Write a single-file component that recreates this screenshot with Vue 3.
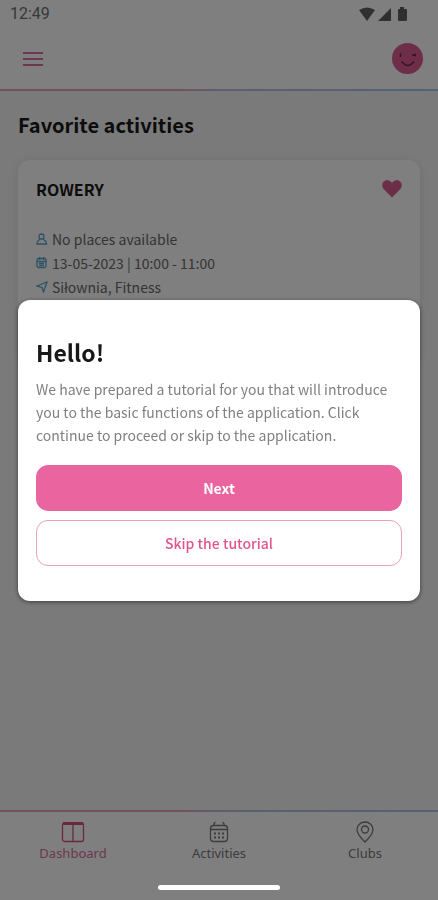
<script setup>
const details = [
  { icon: 'person', text: 'No places available' },
  { icon: 'calendar', text: '13-05-2023 | 10:00 - 11:00' },
  { icon: 'send', text: 'Siłownia, Fitness' },
]
const tabs = [
  { icon: 'dashboard', label: 'Dashboard', active: true },
  { icon: 'activities', label: 'Activities', active: false },
  { icon: 'clubs', label: 'Clubs', active: false },
]
</script>

<template>
  <div class="screen">
    <header class="top">
      <div class="status">
        <span>12:49</span>
        <svg class="status-icons" viewBox="0 0 49 16" aria-hidden="true">
          <path d="M0 4Q8 -1 16 4L8 15Z" />
          <path d="M19 15L32 2V15Z" />
          <path d="M41 3V1h4v2h2q1 0 1 1v10q0 1-1 1h-7q-1 0-1-1V4q0-1 1-1z" />
        </svg>
      </div>
      <div class="bar">
        <button class="icon-button" type="button" aria-label="Menu">
          <svg class="menu-icon" viewBox="0 0 20 16"><path d="M0 2h20M0 8h20M0 14h20" /></svg>
        </button>
        <button class="icon-button" type="button" aria-label="Profile">
          <svg class="avatar" viewBox="0 0 31 31">
            <circle cx="15.5" cy="15.5" r="15.5" />
            <path d="M8.500 10.500v3.500M20 12.500l4-1.200M21 12l3 .8M9.500 18.500l1.500 1.500q5 5 9.500 0l1.500-1.500" />
          </svg>
        </button>
      </div>
    </header>

    <main class="content">
      <h1>Favorite activities</h1>
      <article class="card">
        <div class="card-head">
          <h2>ROWERY</h2>
          <button class="icon-button" type="button" aria-label="Remove from favorites">
            <svg class="heart" viewBox="0 0 20 18">
              <path d="M10 17.500L2 9.500C-.8 6.500 0 2 3 .8 5.500-.3 8.500.6 10 3 11.500.6 14.500-.3 17 .8 20 2 20.800 6.500 18 9.500Z" />
            </svg>
          </button>
        </div>
        <ul class="details">
          <li v-for="item in details" :key="item.icon">
            <svg class="detail-icon" viewBox="0 0 12 12" aria-hidden="true">
              <template v-if="item.icon === 'person'">
                <circle cx="5.500" cy="3.500" r="2.500" />
                <path d="M4 6L1.500 8.500 1 11h9.500L10 8.500 7 6" />
              </template>
              <template v-else-if="item.icon === 'calendar'">
                <rect x="1" y="1.500" width="9" height="9" rx="1.500" />
                <path d="M1 4.500h9M3.500 0v3M7.500 0v3M3 6.500h5M3 8.500h5" />
              </template>
              <path v-else d="M1 5L11 1 7.500 11 6 6.500Z" />
            </svg>
            <span>{{ item.text }}</span>
          </li>
        </ul>
      </article>
    </main>

    <nav class="tabs">
      <a v-for="tab in tabs" :key="tab.label" href="#" :class="{ active: tab.active }">
        <svg class="tab-icon" viewBox="0 0 24 22" aria-hidden="true">
          <template v-if="tab.icon === 'dashboard'">
            <rect x="1.500" y="2" width="21" height="18.500" rx="2" />
            <path d="M12 2v18" />
            <path class="thick" d="M2 2.500h20" />
          </template>
          <template v-else-if="tab.icon === 'activities'">
            <rect x="3.500" y="4.500" width="17" height="16" rx="3" />
            <path d="M3.500 8.500h17M7 4.500V3q0-1.500 1.500-1.500M17 4.500V3q0-1.500-1.500-1.500" />
            <path class="dots" d="M7 12.500h2M11 12.500h2M15 12.500h2M7 16.500h2M11 16.500h2M15 16.500h2" />
          </template>
          <template v-else>
            <path d="M12 21Q4 13.500 4 8.500a8 7.500 0 0 1 16 0Q20 13.500 12 21Z" />
            <circle cx="12" cy="8.500" r="3.500" />
          </template>
        </svg>
        <span>{{ tab.label }}</span>
      </a>
    </nav>

    <div class="overlay">
      <section class="dialog" role="dialog" aria-modal="true" aria-labelledby="dialog-title">
        <h2 id="dialog-title">Hello!</h2>
        <p>
          We have prepared a tutorial for you that will introduce you to the basic functions of
          the application. Click continue to proceed or skip to the application.
        </p>
        <button class="action primary" type="button">Next</button>
        <button class="action" type="button">Skip the tutorial</button>
      </section>
      <div class="home-indicator"></div>
    </div>
  </div>
</template>

<style>
body {
  margin: 0;
}
</style>

<style scoped>
* {
  box-sizing: border-box;
}
.screen {
  display: flex;
  flex-direction: column;
  min-height: 100vh;
  background: #f4f4f4;
  color: #181818;
  font-family: "Noto Sans CJK SC", "Noto Sans", sans-serif;
}
h1, h2, p, ul {
  margin: 0;
  padding: 0;
}
svg {
  display: block;
}
.icon-button {
  padding: 0;
  border: 0;
  background: none;
}
.top {
  background: #fff;
  border-bottom: 2px solid;
  border-image: linear-gradient(90deg, #e8a0b4 40%, #bcbcdc 50%, #a8c4e8) 1;
}
.status {
  display: flex;
  align-items: center;
  justify-content: space-between;
  height: 28px;
  padding: 0 30px 0 10px;
  color: #707070;
  font: 16px/28px Roboto, sans-serif;
}
.status-icons {
  width: 49px;
  height: 16px;
  fill: #606060;
}
.bar {
  display: flex;
  align-items: center;
  justify-content: space-between;
  height: 61px;
  padding: 0 15px 0 23px;
}
.menu-icon {
  width: 20px;
  height: 16px;
  fill: none;
  stroke: #d8709a;
  stroke-width: 2;
}
.avatar {
  width: 31px;
  height: 31px;
  fill: #dc5a90;
}
.avatar path {
  fill: none;
  stroke: #702848;
  stroke-width: 1.500;
}
.content {
  flex: 1;
  padding: 18px;
}
h1 {
  font-size: 20px;
  line-height: 32px;
}
.card {
  margin-top: 19px;
  padding-bottom: 54px;
  border-radius: 12px;
  background: #fff;
  box-shadow: 0 1px 8px rgba(0, 0, 0, 0.1);
}
.card-head {
  display: flex;
  align-items: center;
  justify-content: space-between;
  height: 58px;
  padding: 0 18px;
}
.card h2 {
  font-size: 16px;
  line-height: 24px;
}
.heart {
  width: 20px;
  height: 18px;
  fill: #d85a8c;
}
.details {
  padding: 9px 18px;
  list-style: none;
  color: #686868;
  font-size: 14px;
  line-height: 24px;
}
.details li {
  display: flex;
  align-items: center;
  gap: 4px;
}
.detail-icon {
  width: 12px;
  height: 12px;
  fill: none;
  stroke: #58a4cc;
  stroke-width: 1.300;
}
.tabs {
  display: grid;
  grid-template-columns: repeat(3, 1fr);
  height: 90px;
  padding-top: 9px;
  border-top: 2px solid;
  border-image: linear-gradient(90deg, #e8a0b4 40%, #bcbcdc 50%, #a8c4e8) 1;
  background: #fff;
}
.tabs a {
  display: flex;
  flex-direction: column;
  align-items: center;
  color: #787878;
  font: 13px/20px "Noto Sans", sans-serif;
  text-decoration: none;
}
.tabs a.active {
  color: #d8709a;
}
.tab-icon {
  width: 24px;
  height: 22px;
  fill: none;
  stroke: currentColor;
  stroke-width: 1.300;
}
.active .tab-icon {
  stroke: #d0507f;
}
.thick {
  stroke-width: 3;
}
.dots {
  stroke-width: 2;
}
.overlay {
  position: fixed;
  inset: 0;
  display: grid;
  align-items: center;
  padding: 0 18px;
  background: rgba(0, 0, 0, 0.5);
}
.dialog {
  display: flex;
  flex-direction: column;
  padding: 36px 18px 35px;
  border-radius: 12px;
  background: #fff;
  box-shadow: 0 1px 4px rgba(0, 0, 0, 0.5);
}
.dialog h2 {
  font-size: 23px;
  line-height: 32px;
}
.dialog p {
  margin: 10px 0 18px;
  color: #808080;
  font-size: 14px;
  line-height: 23px;
}
.action {
  height: 46px;
  border: 1px solid #eba0bc;
  border-radius: 12px;
  background: #fff;
  color: #e0558f;
  font: 500 14px/20px "Noto Sans CJK SC", sans-serif;
}
.action + .action {
  margin-top: 9px;
}
.primary {
  border-color: #ea649f;
  background: #ea649f;
  color: #fff;
  font-weight: 700;
}
.home-indicator {
  position: absolute;
  bottom: 10px;
  left: 50%;
  width: 122px;
  height: 5px;
  margin-left: -61px;
  border-radius: 3px;
  background: #fff;
}
</style>
